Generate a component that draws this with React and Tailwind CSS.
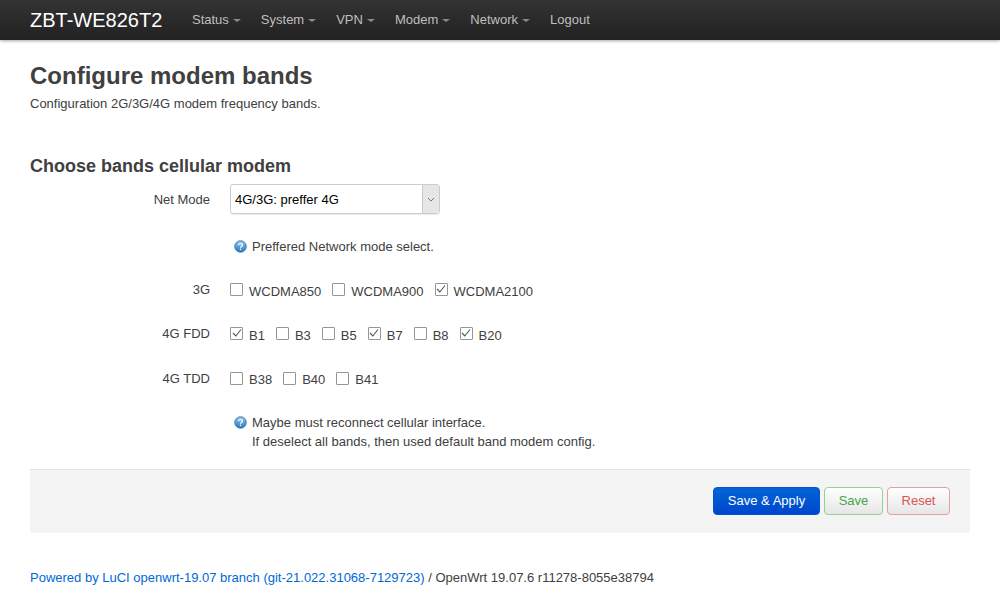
const sans = "font-['Liberation_Sans',Arial,sans-serif]";

const nav = ["Status", "System", "VPN", "Modem", "Network"];

function Caret() {
  return <span className="ml-[4px] inline-block h-0 w-0 border-x-[4px] border-t-[3px] border-x-transparent border-t-[#8c8c8c]" />;
}

function HelpIcon() {
  return (
    <svg width="13" height="13" viewBox="0 0 14 14" className="shrink-0">
      <defs>
        <linearGradient id="help" x1="0" y1="0" x2="0" y2="1">
          <stop offset="0" stopColor="#9cc8ec" />
          <stop offset="1" stopColor="#1f74c2" />
        </linearGradient>
      </defs>
      <circle cx="7" cy="7" r="6.2" fill="url(#help)" stroke="#3f77ab" strokeWidth="1" />
      <path d="M5 5.4c.2-1.1 1-1.6 2.1-1.6 1.2 0 2 .6 2 1.6 0 1.5-2 1.4-2 3" fill="none" stroke="#fff" strokeWidth="1.4" />
      <rect x="6.3" y="9.3" width="1.5" height="1.5" fill="#fff" />
    </svg>
  );
}

function Check({ label, checked, gap, low }) {
  return (
    <span className={`flex items-center ${gap}`}>
      <span className="flex h-[13px] w-[13px] items-center justify-center rounded-[1px] border border-[#969696] bg-white">
        {checked && (
          <svg width="10" height="10" viewBox="0 0 10 10">
            <path d="M1 5l2.8 3L9 1.5" fill="none" stroke="#555" strokeWidth="1.1" />
          </svg>
        )}
      </span>
      <span className={`ml-[6px] text-[#404040] ${low ? "translate-y-[3px]" : "translate-y-[2px]"}`}>{label}</span>
    </span>
  );
}

function Row({ label, className, children }) {
  return (
    <div className={`flex items-center ${className}`}>
      <div className="w-[180px] translate-y-[1px] text-right text-[#404040]">{label}</div>
      <div className="ml-[20px] flex items-center">{children}</div>
    </div>
  );
}

export default function App() {
  return (
    <div className={`h-[598px] overflow-hidden bg-white text-[13px] leading-[18px] text-[#404040] ${sans}`}>
      <div className="flex h-10 items-center bg-gradient-to-b from-[#333] to-[#222] pl-[30px] shadow-[0_1px_3px_rgba(0,0,0,0.35)]">
        <div className="w-[162px] text-[20px] text-white">ZBT-WE826T2</div>
        <div className="flex items-center gap-[20px] text-[#bfbfbf]">
          {nav.map((n) => (
            <span key={n} className="flex items-center">
              {n}
              <Caret />
            </span>
          ))}
          <span>Logout</span>
        </div>
      </div>

      <div className="px-[30px]">
        <h2 className="mt-[22px] text-[24px] font-bold leading-[28px]">Configure modem bands</h2>
        <p className="mt-[5px]">Configuration 2G/3G/4G modem frequency bands.</p>

        <h3 className="mt-[42px] text-[18px] font-bold leading-[22px]">Choose bands cellular modem</h3>

        <Row label="Net Mode" className="mt-[7px] h-[30px]">
          <div className="flex h-[30px] w-[210px] items-stretch rounded-[3px] border border-[#ccc] shadow-[0_1px_1px_rgba(0,0,0,0.08)]">
            <div className="flex flex-1 items-center pl-[4px] pt-[1px] text-black">4G/3G: preffer 4G</div>
            <div className="flex w-[17px] items-center justify-center border-l border-[#ccc] bg-[#e6e6e6]">
              <svg width="8" height="5" viewBox="0 0 8 5">
                <path d="M1 1l3 3 3-3" fill="none" stroke="#777" strokeWidth="1" />
              </svg>
            </div>
          </div>
        </Row>

        <div className="ml-[204px] mt-[23px] flex h-[18px] items-center gap-[5px]">
          <HelpIcon />
          <span className="translate-y-[1px]">Preffered Network mode select.</span>
        </div>

        <Row label="3G" className="mt-[25px] h-[18px]">
          <Check low label="WCDMA850" gap="mr-[11px]" />
          <Check low label="WCDMA900" gap="mr-[11px]" />
          <Check low label="WCDMA2100" checked />
        </Row>
        <Row label="4G FDD" className="mt-[26px] h-[18px]">
          <Check low label="B1" checked gap="mr-[11px]" />
          <Check low label="B3" gap="mr-[11px]" />
          <Check low label="B5" gap="mr-[11px]" />
          <Check low label="B7" checked gap="mr-[11px]" />
          <Check low label="B8" gap="mr-[11px]" />
          <Check low label="B20" checked />
        </Row>
        <Row label="4G TDD" className="mt-[27px] h-[18px]">
          <Check label="B38" gap="mr-[11px]" />
          <Check label="B40" gap="mr-[11px]" />
          <Check label="B41" />
        </Row>

        <div className="ml-[204px] mt-[26px] flex h-[18px] items-center gap-[5px]">
          <HelpIcon />
          <span className="translate-y-[1px]">Maybe must reconnect cellular interface.</span>
        </div>
        <div className="ml-[222px] mt-[2px]">If deselect all bands, then used default band modem config.</div>

        <div className="mt-[18px] flex h-[64px] items-center justify-end gap-[4px] rounded-b-[3px] border-t border-[#e5e5e5] bg-[#f4f4f4] pb-[2px] pr-[20px]">
          <button className="h-[28px] w-[107px] rounded-[4px] border border-[#0055cc] bg-gradient-to-b from-[#0064d8] to-[#0046cc] text-white">Save &amp; Apply</button>
          <button className="h-[28px] w-[59px] rounded-[4px] border border-[#93d093] bg-gradient-to-b from-white to-[#e6e6e6] text-[#46a546]">Save</button>
          <button className="h-[28px] w-[63px] rounded-[4px] border border-[#e3a0a0] bg-gradient-to-b from-white to-[#e6e6e6] text-[#d9534f]">Reset</button>
        </div>

        <p className="mt-[36px]">
          <span className="text-[#0069d6]">Powered by LuCI openwrt-19.07 branch (git-21.022.31068-7129723)</span> / OpenWrt 19.07.6 r11278-8055e38794
        </p>
      </div>
    </div>
  );
}
